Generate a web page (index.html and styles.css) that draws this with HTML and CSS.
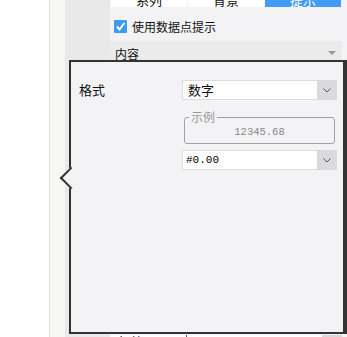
FILE: index.html
```html
<!DOCTYPE html>
<html lang="zh">
<head>
    <meta charset="UTF-8">
    <title>数据点提示</title>
    <link rel="stylesheet" href="styles.css">
</head>
<body>

<div class="app">
    <div class="gutter"></div>
    <div class="rail"></div>
    <div class="side"></div>

    <div class="panel">
        <div class="tabs">
            <div class="tab">系列</div>
            <div class="tab">背景</div>
            <div class="tab active">提示</div>
        </div>

        <label class="check-row">
            <span class="check">
                <svg width="13" height="13" viewBox="0 0 13 13"><polyline points="3,6.5 5.5,9.5 10.5,3" fill="none" stroke="#fff" stroke-width="2"/></svg>
            </span>
            使用数据点提示
        </label>

        <div class="section-head">
            <span>内容</span>
            <span class="caret"></span>
        </div>

        <div class="foot">
            <div class="foot-label">标签</div>
            <div class="foot-field"></div>
            <div class="foot-btn"></div>
        </div>
    </div>
</div>

<!-- popup del formato -->
<div class="popup">
    <div class="field-label">格式</div>
    <div class="select">
        <div class="select-value">数字</div>
        <div class="select-btn">
            <svg width="8" height="5" viewBox="0 0 8 5"><polyline points="0.5,0.5 4,4 7.5,0.5" fill="none" stroke="#555" stroke-width="1"/></svg>
        </div>
    </div>

    <fieldset class="sample">
        <legend>示例</legend>
        <div class="sample-value">12345.68</div>
    </fieldset>

    <div class="select pattern">
        <div class="select-value">#0.00</div>
        <div class="select-btn">
            <svg width="8" height="5" viewBox="0 0 8 5"><polyline points="0.5,0.5 4,4 7.5,0.5" fill="none" stroke="#555" stroke-width="1"/></svg>
        </div>
    </div>
</div>

</body>
</html>
```

FILE: styles.css
```css
/* Estilos generales */
* {
    box-sizing: border-box;
    margin: 0;
    padding: 0;
}

body {
    font-family: "Noto Sans CJK SC", "Liberation Sans", sans-serif;
    font-size: 12px;
    color: #111;
    background-color: #ffffff;
    overflow: hidden;
}

/* Columnas de fondo */
.app {
    display: flex;
    height: 337px;
}

.gutter {
    width: 49px;
    background-color: #ffffff;
}

.rail {
    width: 16px;
    background-color: #f7f7f5;
    border-left: 1px solid #e2e2e0;
}

.side {
    width: 45px;
    background-color: #e9e9e9;
}

.panel {
    flex: 1;
    display: flex;
    flex-direction: column;
    background-color: #f3f3f5;
    padding-right: 5px;
    overflow: hidden;
}

/* Pestañas */
.tabs {
    display: flex;
    gap: 1px;
    margin-top: -13px;
    padding-left: 1px;
}

.tab {
    width: 76px;
    height: 20px;
    line-height: 26px;
    text-align: center;
    font-size: 13px;
    background-color: #ffffff;
    overflow: hidden;
}

.tab.active {
    background-color: #409cf5;
    color: #ffffff;
}

/* Casilla */
.check-row {
    display: flex;
    align-items: center;
    gap: 5px;
    height: 14px;
    margin-top: 12px;
    padding-left: 4px;
    font-size: 12px;
}

.check {
    width: 13px;
    height: 13px;
    background-color: #3d9bf0;
    border-radius: 1px;
    display: flex;
}

/* Cabecera de sección */
.section-head {
    display: flex;
    justify-content: space-between;
    align-items: center;
    height: 24px;
    margin-top: 8px;
    padding: 0 6px 0 5px;
    background-color: #ebebeb;
    font-size: 12px;
}

.caret {
    width: 0;
    height: 0;
    border-left: 4px solid transparent;
    border-right: 4px solid transparent;
    border-top: 4px solid #999999;
}

/* Fila inferior */
.foot {
    display: flex;
    height: 20px;
    margin-top: auto;
    margin-bottom: -18px;
    margin-left: -4px;
    background-color: #ffffff;
}

.foot-label {
    width: 81px;
    padding-left: 12px;
    line-height: 14px;
    font-size: 13px;
    border-right: 1px solid #555555;
}

.foot-field {
    flex: 1;
}

.foot-btn {
    width: 20px;
    background-color: #d8d8d8;
}

/* Ventana emergente */
.popup {
    position: absolute;
    left: 69px;
    top: 60px;
    width: 278px;
    height: 274px;
    border: 2px solid #333333;
    border-right-width: 4px;
    background-color: #f3f3f5;
    padding: 18px 0 0 8px;
    display: grid;
    grid-template-columns: 103px 155px;
    align-content: start;
}

.popup::before {
    content: "";
    position: absolute;
    left: -8px;
    top: 108px;
    width: 14px;
    height: 14px;
    background-color: #f3f3f5;
    border-left: 2px solid #333333;
    border-bottom: 2px solid #333333;
    transform: rotate(45deg);
}

.field-label {
    font-size: 13px;
    line-height: 20px;
}

.select {
    display: flex;
    height: 20px;
    border: 1px solid #dcdcdc;
    background-color: #ffffff;
}

.select-value {
    flex: 1;
    padding-left: 5px;
    font-size: 13px;
    line-height: 18px;
}

.select-btn {
    width: 20px;
    margin: -1px -1px -1px 0;
    background-color: #dadadc;
    display: flex;
    align-items: center;
    justify-content: center;
}

/* Ejemplo */
.sample {
    grid-column: 2;
    margin: 12px 2px 0 2px;
    border: 1px solid #a0a0a0;
    border-radius: 3px;
    height: 32px;
}

.sample legend {
    margin-left: 4px;
    padding: 0 2px;
    font-size: 12px;
    line-height: 10px;
    color: #999999;
}

.sample-value {
    padding-top: 2px;
    text-align: center;
    font-family: "Liberation Mono", monospace;
    font-size: 10.5px;
    line-height: 16px;
    color: #888888;
}

.pattern {
    grid-column: 2;
    margin-top: 6px;
}

.pattern .select-value {
    padding-left: 3px;
    font-family: "Liberation Mono", monospace;
    font-size: 11px;
    color: #000;
}
```
